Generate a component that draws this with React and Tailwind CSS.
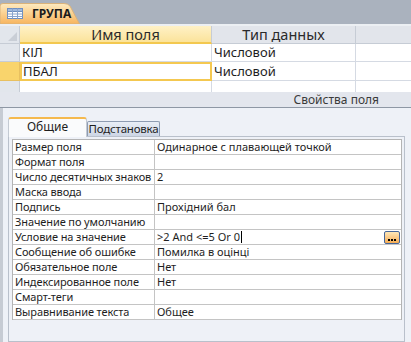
export default function App() {
  const props = [
    ["Размер поля", "Одинарное с плавающей точкой"],
    ["Формат поля", ""],
    ["Число десятичных знаков", "2"],
    ["Маска ввода", ""],
    ["Подпись", "Прохідний бал"],
    ["Значение по умолчанию", ""],
    ["Условие на значение", ">2 And <=5 Or 0", true],
    ["Сообщение об ошибке", "Помилка в оцінці"],
    ["Обязательное поле", "Нет"],
    ["Индексированное поле", "Нет"],
    ["Смарт-теги", ""],
    ["Выравнивание текста", "Общее"],
  ];
  return (
    <div className="w-[411px] h-[342px] overflow-hidden flex flex-col bg-[#eef1f7] font-['Noto_Sans',sans-serif] text-[#1e1e1e]">
      {/* document tab bar */}
      <div className="h-[24px] bg-[#aab2be] flex items-end shrink-0">
        <div className="relative w-[80px] h-[21px] flex items-center">
          <svg className="absolute inset-0" width="80" height="21" viewBox="0 0 80 21">
            <defs>
              <linearGradient id="tabg" x1="0" y1="0" x2="0" y2="1">
                <stop offset="0" stopColor="#fdeac0" />
                <stop offset="0.5" stopColor="#fbd08f" />
                <stop offset="1" stopColor="#f7b45e" />
              </linearGradient>
            </defs>
            <path d="M0 21 V3 Q0 0.5 3 0.5 H64 Q68 0.5 70 3 L79.5 21 Z" fill="url(#tabg)" stroke="#d9b27a" strokeWidth="1" />
          </svg>
          <svg className="relative ml-[7px]" width="16" height="11" viewBox="0 0 16 11">
            <rect x="0.5" y="0.5" width="15" height="10" fill="#ffffff" stroke="#6f8fbf" />
            <rect x="1" y="1" width="14" height="2.5" fill="#9fb9de" />
            <line x1="0.5" y1="3.5" x2="15.5" y2="3.5" stroke="#6f8fbf" />
            <line x1="0.5" y1="6" x2="15.5" y2="6" stroke="#8aa4cc" />
            <line x1="0.5" y1="8.5" x2="15.5" y2="8.5" stroke="#8aa4cc" />
            <line x1="5.5" y1="0.5" x2="5.5" y2="10.5" stroke="#8aa4cc" />
            <line x1="10.5" y1="0.5" x2="10.5" y2="10.5" stroke="#8aa4cc" />
          </svg>
          <span className="relative ml-[9px] text-[12px] font-bold text-[#1b1b1b] leading-none">ГРУПА</span>
        </div>
      </div>
      <div className="h-[2px] bg-[#eceff3] shrink-0" />

      {/* design grid header */}
      <div className="h-[18px] flex shrink-0 text-[14.5px] leading-[17px] text-[#2a2a2a]">
        <div className="w-[20px] bg-[#e2e6ec] border-b border-r border-[#c6ccd5] relative">
          <svg className="absolute right-[2px] bottom-[2px]" width="9" height="9" viewBox="0 0 9 9">
            <path d="M9 0 V9 H0 Z" fill="#c9ced6" />
          </svg>
        </div>
        <div className="w-[192px] bg-gradient-to-b from-[#fff1c6] to-[#fbe39a] border-b-2 border-[#f3c84f] border-r border-r-[#c6ccd5] flex justify-center pl-[20px]">Имя поля</div>
        <div className="w-[144px] bg-[#e2e5eb] border-b border-r border-[#c6ccd5] flex justify-center">Тип данных</div>
        <div className="flex-1 bg-[#e2e5eb] border-b border-[#c6ccd5]" />
      </div>
      {/* rows */}
      <div className="h-[18px] flex shrink-0 text-[13px] leading-[17px]">
        <div className="w-[20px] bg-[#e2e6ec] border-b border-r border-[#c6ccd5]" />
        <div className="w-[192px] bg-white border-b border-r border-[#d5dae3] pl-[2px]">КІЛ</div>
        <div className="w-[144px] bg-white border-b border-r border-[#d5dae3] pl-[2px]">Числовой</div>
        <div className="flex-1 bg-white border-b border-[#d5dae3]" />
      </div>
      <div className="h-[19px] flex shrink-0 text-[13px] leading-[15px]">
        <div className="w-[20px] bg-[#f9d46c] border-b border-r border-[#e8c060]" />
        <div className="w-[192px] bg-white border-2 border-[#f4c850] pl-[1px]">ПБАЛ</div>
        <div className="w-[144px] bg-white border-b border-r border-[#d5dae3] pl-[2px] leading-[18px]">Числовой</div>
        <div className="flex-1 bg-white border-b border-[#d5dae3]" />
      </div>
      <div className="h-[11px] flex shrink-0">
        <div className="w-[20px] bg-[#e2e6ec] border-r border-[#c6ccd5]" />
        <div className="w-[192px] bg-white border-r border-[#d5dae3]" />
        <div className="w-[144px] bg-white border-r border-[#d5dae3]" />
        <div className="flex-1 bg-white" />
      </div>

      {/* field properties caption */}
      <div className="h-[16px] shrink-0 bg-[#e3e6ed] border-b border-[#8e97a4] flex justify-end pr-[32px] text-[12px] leading-[15px] text-[#3a3a3a]">
        Свойства поля
      </div>

      {/* properties area */}
      <div className="flex-1 border-l-[3px] border-[#c6cbd3] pt-[9px] pl-[5px] pr-[6px] flex flex-col">
        <div className="flex items-end h-[19px] text-[12px]">
          <div className="w-[79px] h-[20px] bg-[#fafbfc] border-t-2 border-x border-t-[#f5b94e] border-x-[#c4cad3] rounded-t-[3px] flex justify-center leading-[16px] text-[#1e1e1e] relative z-10 mb-[-1px]">
            Общие
          </div>
          <div className="w-[73px] h-[15px] bg-gradient-to-b from-[#e9eef6] to-[#cdd6e5] border border-b-0 border-[#8e9cb2] rounded-t-[2px] flex justify-center leading-[13px] text-[11.5px] tracking-[-0.2px] text-[#1e1e1e] whitespace-nowrap overflow-hidden">
            Подстановка
          </div>
        </div>
        <div className="flex-1 border border-[#b9c0cb] pt-[2px] pl-[3px] pr-[2px]">
          <div className="border border-[#b4b4b4] border-b-0 bg-white text-[11px]">
            {props.map(([label, value, active]) => (
              <div key={label} className="h-[15px] flex border-b border-[#c4c4c4]">
                <div className="w-[142px] shrink-0 border-r border-[#c4c4c4] pl-[2px] leading-[14px] whitespace-nowrap overflow-hidden tracking-[-0.1px]">
                  {label}
                </div>
                <div className="flex-1 flex items-center justify-between pl-[2px] leading-[14px] whitespace-nowrap">
                  <span className="flex items-center h-[14px]">
                    {value}
                    {active && <span className="inline-block w-[1px] h-[12px] bg-black ml-[1px]" />}
                  </span>
                  {active && (
                    <div className="w-[16px] h-[13px] mr-[1px] rounded-[2px] border border-[#47679a] bg-gradient-to-b from-[#fde7b8] to-[#f6ad52] flex items-end justify-center gap-[1px] pb-[2px]">
                      <span className="w-[2px] h-[2px] bg-black" />
                      <span className="w-[2px] h-[2px] bg-black" />
                      <span className="w-[2px] h-[2px] bg-black" />
                    </div>
                  )}
                </div>
              </div>
            ))}
          </div>
        </div>
      </div>
    </div>
  );
}
